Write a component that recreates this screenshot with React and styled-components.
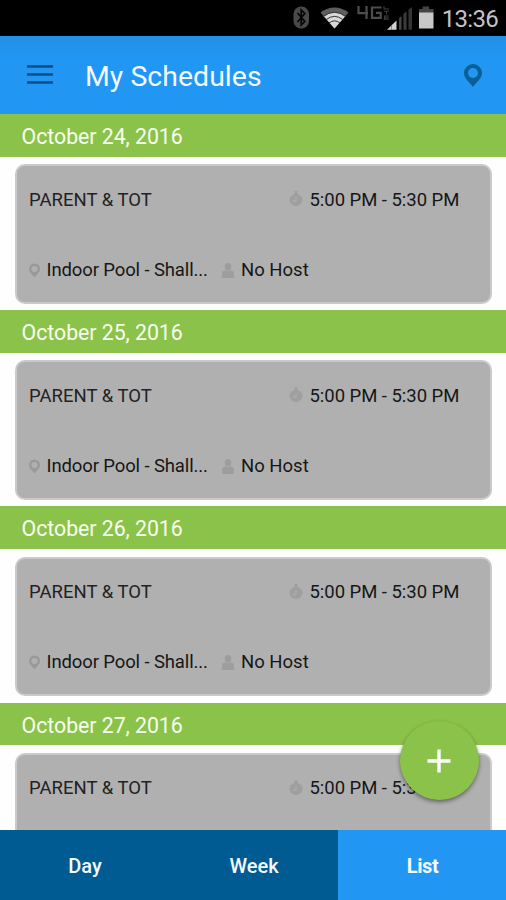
import React, { useState } from 'react';
import styled, { createGlobalStyle } from 'styled-components';

const GlobalStyle = createGlobalStyle`
  * {
    box-sizing: border-box;
  }

  body {
    margin: 0;
    background-color: #fff;
    font-family: Roboto, 'Liberation Sans', sans-serif;
  }

  button {
    border: 0;
    padding: 0;
    font-family: inherit;
    cursor: pointer;
  }

  svg {
    display: block;
    flex: none;
  }
`;

const Screen = styled.div`
  position: relative;
  display: flex;
  flex-direction: column;
  width: 506px;
  height: 900px;
  overflow: hidden;
  background-color: #fefefe;
`;

const StatusBar = styled.div`
  display: flex;
  flex: none;
  height: 36px;
  padding-right: 8px;
  justify-content: flex-end;
  background-color: #000;
`;

const StatusTime = styled.span`
  margin-left: 7px;
  padding-top: 1px;
  color: #c4c4c4;
  font-size: 24px;
  line-height: 36px;
  letter-spacing: -0.7px;
  white-space: nowrap;
`;

const HeaderUI = styled.header`
  display: flex;
  flex: none;
  height: 78px;
  padding: 0 24px 0 26px;
  align-items: center;
  background: linear-gradient(#2490e7, #2196f3 22px);
`;

const HeaderButton = styled.button`
  display: flex;
  background: none;
`;

const HeaderTitle = styled.h1`
  flex: 1;
  margin: 3px 0 0 31px;
  color: #f3faff;
  font-size: 28.4px;
  font-weight: 400;
  line-height: 34px;
  letter-spacing: 0.06px;
`;

const ScheduleList = styled.main`
  flex: 1;
  min-height: 0;
  overflow: hidden;
`;

const DaySection = styled.section`
  height: 196.2px;
`;

const DayTitle = styled.h2`
  height: 42.8px;
  margin: 0;
  padding-left: 21.6px;
  background-color: #8bc34a;
  color: #f8fff0;
  font-size: 21.3px;
  font-weight: 400;
  line-height: 45px;
  letter-spacing: -0.04px;
`;

const Card = styled.article`
  display: flex;
  flex-direction: column;
  justify-content: space-between;
  width: 477.5px;
  height: 139.5px;
  margin: 7.5px 0 0 14.5px;
  padding: 21.5px 12px 19.7px 12px;
  border: 2.5px solid #cacaca;
  border-radius: 10px;
  background-color: #b0b0b0;
`;

const CardRow = styled.div`
  display: flex;
  height: 24px;
  align-items: center;
  color: #161616;
  font-size: 18.5px;
  line-height: 24px;
  white-space: nowrap;
`;

const CardName = styled.span`
  width: 260px;
  padding-left: 0.6px;
  font-size: 18.5px;
  color: #222;
`;

const CardDetail = styled.span`
  display: flex;
  width: ${(props) => props.$width || 'auto'};
  align-items: center;
`;

const CardText = styled.span`
  margin-left: ${(props) => props.$gap}px;
  letter-spacing: ${(props) => props.$spacing || 0}px;
`;

const AddButton = styled.button`
  position: absolute;
  right: 27.5px;
  bottom: 100px;
  display: flex;
  width: 79px;
  height: 79px;
  padding-right: 0.5px;
  align-items: center;
  justify-content: center;
  border-radius: 50%;
  background-color: #8bc34a;
  box-shadow: 0 2px 4px rgba(0, 0, 0, 0.45);
`;

const TabBar = styled.nav`
  display: grid;
  flex: none;
  grid-template-columns: 169px 169px 168px;
  height: 70px;
`;

const Tab = styled.button`
  padding-top: 2px;
  padding-left: 1px;
  background-color: ${(props) => (props.$active ? '#2196f3' : '#005b92')};
  color: #f4faff;
  font-size: 20px;
  font-weight: ${(props) => (props.$active ? 700 : 500)};
  letter-spacing: ${(props) => (props.$active ? -0.4 : 0)}px;
`;

const StatusIcons = () => (
  <svg width="145" height="36" viewBox="0 0 145 36">
    <rect x="3.5" y="6.5" width="15.5" height="22" rx="7.5" fill="#494949" />
    <path d="M7.5 13 L14.8 21.5 L11.2 25 V10 L14.8 13.5 L7.5 22" fill="none" stroke="#050505" strokeWidth="1.7" />
    <path d="M30.5 12.5 Q44.5 2.5 58.5 12.5 L44.5 28.5 Z" fill="#5e5e5e" />
    <path d="M34 16.4 Q44.5 8.8 55 16.4 L44.5 28.5 Z" fill="#d8d8d8" />
    <g fill="none" stroke="#333" strokeWidth="1">
      <path d="M33 16.7 Q44.5 7.8 56 16.7" />
      <path d="M36 19.7 Q44.5 13 53 19.7" />
      <path d="M39 23 Q44.5 18.7 50 23" />
    </g>
    <g fill="none" stroke="#4d4d4d" strokeWidth="2.2">
      <path d="M68.5 6 V13.2 H78 M76.5 6 V19" />
      <path d="M91.5 7.5 H82 V17.8 H90.7 V12.8 H86" />
    </g>
    <g fill="none" stroke="#3f3f3f" strokeWidth="1.1">
      <path d="M94 6 V9 H99" />
      <path d="M94 11.3 H99 M96.5 11.3 V14.5" />
      <path d="M99 16 H94.5 V19.3 H99 M94.5 17.7 H98.5" />
    </g>
    <path d="M97 29.7 L106.5 20.5 V29.7 Z" fill="#d0d0d0" />
    <path d="M109 18.3 L111.5 16 V29.7 H109 Z" fill="#454545" />
    <path d="M113.5 14 L116.5 11.2 V29.7 H113.5 Z" fill="#3c3c3c" />
    <path d="M118.5 9.5 L122 7 V29.7 H118.5 Z" fill="#343434" />
    <path d="M101.5 25 V30" stroke="#777" strokeWidth="0.8" />
    <path d="M129 9 H132.5 V6.5 H139 V9 H143.5 V13 H129 Z" fill="#444" />
    <rect x="129" y="12.5" width="14.5" height="16" fill="#c8c8c8" />
  </svg>
);

const MenuIcon = () => (
  <svg width="28" height="20" viewBox="0 0 28 20">
    <path d="M1 1.5 H27 M1 9.5 H27 M1 17.5 H27" stroke="#0b4f86" strokeWidth="2.3" />
  </svg>
);

const PinIcon = ({ width, height, color, hole }) => (
  <svg width={width} height={height} viewBox="0 0 18 23">
    <path
      d="M9 0 A9 9 0 0 0 0 9 C0 14.5 6 18.5 9 23 C12 18.5 18 14.5 18 9 A9 9 0 0 0 9 0 Z"
      fill={color}
    />
    <circle cx="9" cy="9" r="5" fill={hole} />
  </svg>
);

const TimerIcon = () => (
  <svg width="14" height="17" viewBox="0 0 14 17">
    <path d="M5.5 0 H8.5 V2.5 L13 6 A6.5 6.5 0 1 1 1 6 L5.5 2.5 Z" fill="#9f9f9f" />
    <path d="M7 6 V10.2 H3.5" fill="none" stroke="#adadad" strokeWidth="1.2" />
  </svg>
);

const PersonIcon = () => (
  <svg width="12" height="15" viewBox="0 0 12 15">
    <ellipse cx="6" cy="3.7" rx="3.3" ry="3.7" fill="#9d9d9d" />
    <path d="M0 15 V11 Q0 7.8 3.5 7.5 Q6 9 8.5 7.5 Q12 7.8 12 11 V15 Z" fill="#9d9d9d" />
  </svg>
);

const PlusIcon = () => (
  <svg width="24" height="24" viewBox="0 0 24 24">
    <path d="M12 0.5 V23.5 M0.5 12 H23.5" stroke="#fff" strokeWidth="3.4" />
  </svg>
);

const place = 'Indoor Pool - Shall...';
const host = 'No Host';

const days = [
  { date: 'October 24, 2016', place, host },
  { date: 'October 25, 2016', place, host },
  { date: 'October 26, 2016', place, host },
  { date: 'October 27, 2016' },
];
const tabs = ['Day', 'Week', 'List'];

const ScheduleCard = ({ day }) => (
  <Card>
    <CardRow>
      <CardName>PARENT &amp; TOT</CardName>
      <CardDetail>
        <TimerIcon />
        <CardText $gap={7} $spacing={-0.04}>
          5:00 PM - 5:30 PM
        </CardText>
      </CardDetail>
    </CardRow>
    {day.place && (
      <CardRow>
        <CardDetail $width="193.5px">
          <PinIcon width={11} height={15} color="#999" hole="#b0b0b0" />
          <CardText $gap={7} $spacing={-0.12}>
            {day.place}
          </CardText>
        </CardDetail>
        <CardDetail>
          <PersonIcon />
          <CardText $gap={7}>{day.host}</CardText>
        </CardDetail>
      </CardRow>
    )}
  </Card>
);

const App = () => {
  const [activeTab, setActiveTab] = useState('List');

  return (
    <>
      <GlobalStyle />
      <Screen>
        <StatusBar>
          <StatusIcons />
          <StatusTime>13:36</StatusTime>
        </StatusBar>
        <HeaderUI>
          <HeaderButton aria-label="Menu">
            <MenuIcon />
          </HeaderButton>
          <HeaderTitle>My Schedules</HeaderTitle>
          <HeaderButton aria-label="Locations">
            <PinIcon width={18} height={23} color="#0b5f94" hole="#2196f3" />
          </HeaderButton>
        </HeaderUI>
        <ScheduleList>
          {days.map((day) => (
            <DaySection key={day.date}>
              <DayTitle>{day.date}</DayTitle>
              <ScheduleCard day={day} />
            </DaySection>
          ))}
        </ScheduleList>
        <TabBar>
          {tabs.map((tab) => (
            <Tab key={tab} $active={tab === activeTab} onClick={() => setActiveTab(tab)}>
              {tab}
            </Tab>
          ))}
        </TabBar>
        <AddButton aria-label="Add">
          <PlusIcon />
        </AddButton>
      </Screen>
    </>
  );
};

export default App;
